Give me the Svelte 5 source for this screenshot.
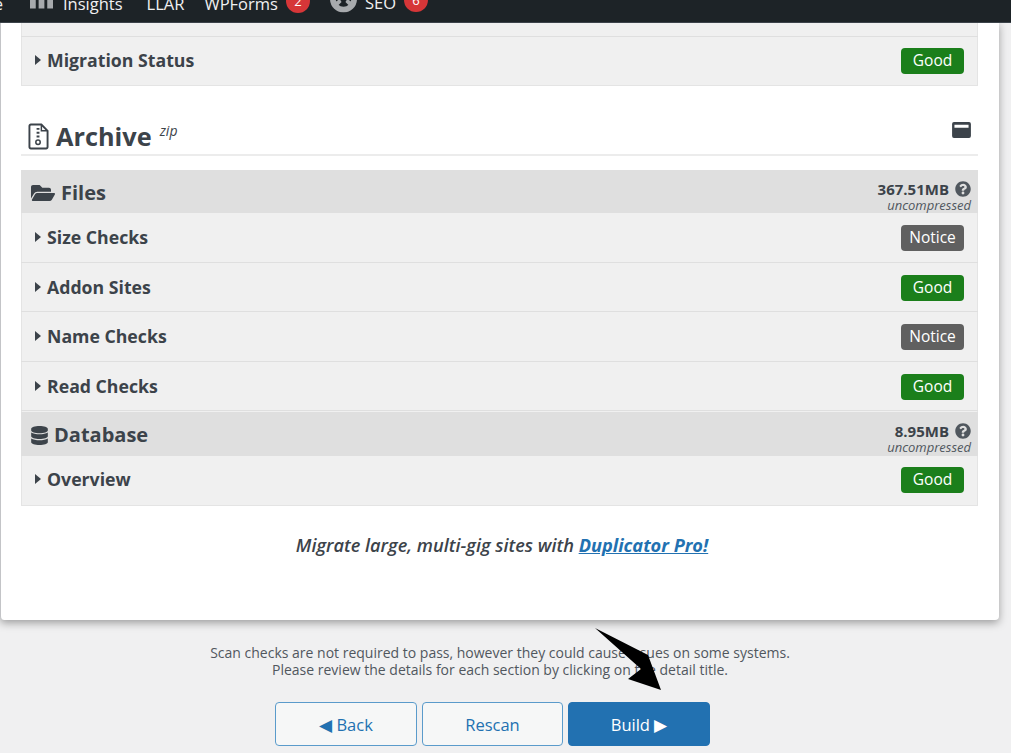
<script>
  const filesRows = [
    { name: "Size Checks", status: "Notice" },
    { name: "Addon Sites", status: "Good" },
    { name: "Name Checks", status: "Notice" },
    { name: "Read Checks", status: "Good" }
  ];
  const helpPath = "M504 256c0 136.997-111.043 248-248 248S8 392.997 8 256C8 119.083 119.043 8 256 8s248 111.083 248 248zM262.655 90c-54.497 0-89.255 22.957-116.549 63.758-3.536 5.286-2.353 12.415 2.715 16.258l34.699 26.31c5.205 3.947 12.621 3.008 16.665-2.122 17.864-22.658 30.113-35.797 57.303-35.797 20.429 0 45.698 13.148 45.698 32.958 0 14.976-12.363 22.667-32.534 33.976C247.128 238.528 216 254.941 216 296v4c0 6.627 5.373 12 12 12h56c6.627 0 12-5.373 12-12v-1.333c0-28.462 83.186-29.647 83.186-106.667 0-58.002-60.165-102-116.531-102zM256 338c-25.365 0-46 20.635-46 46 0 25.364 20.635 46 46 46s46-20.636 46-46c0-25.365-20.635-46-46-46z";
</script>

{#snippet row(name, status, cls)}
  <div class="row {cls}">
    <span class="row-name"><i class="caret"></i>{name}</span>
    <span class="badge {status === 'Good' ? 'good' : 'notice'}">{status}</span>
  </div>
{/snippet}

{#snippet group(size)}
  <div class="size">
    <div class="size-num">
      {size}
      <svg class="help" viewBox="0 0 512 512"><path d={helpPath} /></svg>
    </div>
    <em>uncompressed</em>
  </div>
{/snippet}

<div class="adminbar">
  <span class="item cut">e</span>
  <span class="item insights">
    <svg class="bars" viewBox="0 0 24 20"><path d="M0 0h6v20H0zM9 0h6v20H9zM18 0h6v20h-6z" /></svg>
    Insights
  </span>
  <span class="item llar">LLAR</span>
  <span class="item wpforms">WPForms<b class="count">2</b></span>
  <span class="item seo">
    <svg class="gear" viewBox="0 0 28 28">
      <circle cx="14" cy="14" r="14" fill="#a7aaad" />
      <circle cx="14" cy="14" r="8" fill="#1d2327" />
      <path d="M12 2h4v8h-4zM3 19l7-5 2 3-6 6zM25 19l-7-5-2 3 6 6z" fill="#a7aaad" />
    </svg>
    SEO<b class="count">6</b>
  </span>
</div>

<main>
  <section class="card">
    <div class="box first">
      <div class="row stub"></div>
      {@render row("Migration Status", "Good", "migration")}
    </div>

    <div class="title">
      <h2>
        <svg class="zip" viewBox="0 0 22 28">
          <path d="M3 1.500h11l6.500 6.500V25a1.500 1.500 0 0 1-1.500 1.500H3A1.500 1.500 0 0 1 1.500 25V3A1.500 1.500 0 0 1 3 1.500z" fill="none" stroke="#3c434a" stroke-width="2" />
          <path d="M14 2v6h6" fill="none" stroke="#3c434a" stroke-width="1.500" />
          <path d="M9 5h3v2H9zM9 9h3v2H9zM9 13h3v2H9z" fill="#3c434a" />
          <circle cx="10.500" cy="20" r="2.300" fill="none" stroke="#3c434a" stroke-width="1.600" />
        </svg>
        Archive <sup>zip</sup>
      </h2>
      <svg class="window" viewBox="0 0 20 17">
        <path fill-rule="evenodd" d="M2 0h16a2 2 0 0 1 2 2v13a2 2 0 0 1-2 2H2a2 2 0 0 1-2-2V2a2 2 0 0 1 2-2zM2.500 3v3h15V3z" />
      </svg>
    </div>

    <div class="box">
      <div class="group-head files">
        <h3>
          <svg class="folder" viewBox="0 0 576 512"><path d="M572.694 292.093L500.27 416.248A63.997 63.997 0 0 1 444.989 448H45.025c-18.523 0-30.064-20.093-20.731-36.093l72.424-124.155A64 64 0 0 1 152 256h399.964c18.523 0 30.064 20.093 20.73 36.093zM152 224h328v-48c0-26.51-21.49-48-48-48H272l-64-64H48C21.49 64 0 85.49 0 112v278.046l69.077-118.418C86.214 242.25 117.989 224 152 224z" /></svg>
          Files
        </h3>
        {@render group("367.51MB")}
      </div>
      {#each filesRows as item}
        {@render row(item.name, item.status, "")}
      {/each}
      <div class="group-head database">
        <h3>
          <svg class="db" viewBox="0 0 448 512"><path d="M448 73.143v45.714C448 159.143 347.667 192 224 192S0 159.143 0 118.857V73.143C0 32.857 100.333 0 224 0s224 32.857 224 73.143zM448 176v102.857C448 319.143 347.667 352 224 352S0 319.143 0 278.857V176c48.125 33.143 136.208 48.572 224 48.572S399.874 209.143 448 176zm0 160v102.857C448 479.143 347.667 512 224 512S0 479.143 0 438.857V336c48.125 33.143 136.208 48.572 224 48.572S399.874 369.143 448 336z" /></svg>
          Database
        </h3>
        {@render group("8.95MB")}
      </div>
      {@render row("Overview", "Good", "last")}
    </div>

    <p class="promo">Migrate large, multi-gig sites with <a href="#pro">Duplicator Pro!</a></p>
  </section>

  <p class="note">
    Scan checks are not required to pass, however they could cause issues on some systems.<br />
    Please review the details for each section by clicking on the detail title.
  </p>

  <div class="actions">
    <button class="btn">◀ Back</button>
    <button class="btn rescan">Rescan</button>
    <button class="btn primary">Build ▶</button>
  </div>
</main>

<svg class="arrow" viewBox="0 0 1011 753">
  <path d="M595 628L648 655L661 690L628 679L641 669z" />
</svg>

<style>
  :global(body) {
    background: #f0f0f1;
    font-family: "Open Sans", "Noto Sans", sans-serif;
    color: #3c434a;
    overflow: hidden;
  }
  .adminbar {
    height: 22px;
    background: #1d2327;
    color: #f0f0f1;
    display: flex;
    align-items: flex-end;
    overflow: hidden;
    font-size: 16.500px;
    line-height: 24px;
    box-shadow: 0 1px 0 #3c434a;
    position: relative;
  }
  .item {
    display: flex;
    align-items: center;
    flex: none;
    margin-bottom: 6px;
  }
  .cut {
    width: 3px;
    justify-content: flex-end;
    margin-right: 27px;
  }
  .insights {
    gap: 10px;
    margin-right: 24px;
  }
  .bars {
    width: 23px;
    height: 20px;
    fill: #a7aaad;
    transform: translateY(-5px);
  }
  .llar {
    margin-right: 20px;
  }
  .wpforms {
    margin-right: 20px;
  }
  .gear {
    width: 27px;
    height: 27px;
    margin-right: 8px;
    transform: translateY(-3.500px);
  }
  .count {
    width: 24px;
    height: 24px;
    border-radius: 50%;
    background: #d63638;
    color: #fff;
    font-weight: 400;
    font-size: 13px;
    text-align: center;
    margin-left: 8px;
    transform: translateY(-3px);
  }
  main {
    display: flex;
    flex-direction: column;
    align-items: flex-start;
  }
  .card {
    box-sizing: border-box;
    width: 999px;
    height: 598px;
    padding: 0 20px;
    background: #fff;
    border-left: 1px solid #c3c4c7;
    border-radius: 0 0 4px 4px;
    box-shadow: 0 3px 8px rgba(0, 0, 0, 0.35);
  }
  .box {
    width: 957px;
    background: #f0f0f0;
    box-shadow: inset 0 -1px 0 #e4e4e4, inset -1px 0 0 #e4e4e4, inset 1px 0 0 #e4e4e4;
  }
  .row {
    box-sizing: border-box;
    height: 49.500px;
    display: flex;
    justify-content: space-between;
    align-items: center;
    padding: 0 14px 0 14px;
    border-bottom: 1px solid #dfdfdf;
  }
  .stub {
    height: 15px;
    padding: 0;
  }
  .row.migration {
    height: 49px;
    padding-bottom: 3px;
    border-bottom: 0;
  }
  .row.last {
    height: 50px;
    padding-bottom: 4px;
    border-bottom: 0;
  }
  .row-name {
    font-size: 17.700px;
    font-weight: 700;
    display: flex;
    align-items: center;
    line-height: 24px;
  }
  .caret {
    width: 0;
    height: 0;
    border-left: 6px solid #3c434a;
    border-top: 5.500px solid transparent;
    border-bottom: 5.500px solid transparent;
    margin-right: 6px;
  }
  .badge {
    box-sizing: border-box;
    width: 63px;
    height: 26px;
    margin-top: 2px;
    border-radius: 4px;
    color: #fff;
    font-size: 15.500px;
    line-height: 25px;
    text-align: center;
  }
  .good {
    background: #1b7f1b;
  }
  .notice {
    background: #606060;
  }
  .title {
    width: 957px;
    height: 70px;
    box-sizing: border-box;
    display: flex;
    justify-content: space-between;
    align-items: flex-end;
    border-bottom: 2px solid #ececec;
  }
  .title h2 {
    margin: 0 0 0 7px;
    font-size: 25.300px;
    font-weight: 700;
    line-height: 36px;
    display: flex;
    align-items: center;
    gap: 7px;
  }
  .title sup {
    font-size: 14px;
    font-weight: 400;
    font-style: italic;
    line-height: 14px;
    align-self: flex-start;
    margin: 6px 0 0 1px;
  }
  .zip {
    width: 21px;
    height: 27px;
  }
  .window {
    width: 19px;
    height: 16px;
    fill: #3c434a;
    margin: 0 7px 16px 0;
  }
  .box:not(.first) {
    margin-top: 14px;
  }
  .group-head {
    box-sizing: border-box;
    height: 44px;
    background: #dfdfdf;
    display: flex;
    justify-content: space-between;
    padding: 0 7px 0 10px;
  }
  .group-head.files {
    height: 43px;
  }
  .group-head.database {
    margin-top: 1px;
  }
  .group-head h3 {
    box-sizing: border-box;
    margin: 0;
    padding-top: 2px;
    font-size: 20px;
    font-weight: 700;
    line-height: 36px;
    display: flex;
    align-items: center;
    gap: 6px;
  }
  .folder {
    width: 24px;
    height: 22px;
    fill: #3c434a;
  }
  .db {
    width: 17px;
    height: 19px;
    fill: #3c434a;
  }
  .size {
    text-align: right;
    margin-top: 11px;
    font-size: 15px;
    line-height: 16px;
  }
  .size-num {
    font-weight: 700;
    display: flex;
    align-items: center;
    justify-content: flex-end;
    gap: 6px;
  }
  .size em {
    display: block;
    margin-top: 1px;
    font-size: 13px;
    line-height: 15px;
    color: #50575e;
  }
  .help {
    width: 16px;
    height: 16px;
    fill: #50575e;
  }
  .promo {
    margin: 27px 0 0;
    padding-left: 5px;
    width: 957px;
    box-sizing: border-box;
    text-align: center;
    font-size: 18.200px;
    font-weight: 600;
    font-style: italic;
    line-height: 24px;
  }
  .promo a {
    color: #2271b1;
    font-weight: 700;
  }
  .note {
    width: 1000px;
    margin: 24px 0 0;
    text-align: center;
    font-size: 14px;
    line-height: 17px;
    color: #50575e;
  }
  .actions {
    display: flex;
    gap: 5px;
    margin-top: 24px;
    margin-left: 275px;
  }
  .btn {
    box-sizing: border-box;
    width: 142px;
    height: 44px;
    background: #f6f7f7;
    color: #2271b1;
    border: 1px solid #5a9bcb;
    border-radius: 4px;
    font-family: inherit;
    font-size: 16.500px;
  }
  .rescan {
    width: 141px;
  }
  .primary {
    background: #2271b1;
    border-color: #2271b1;
    color: #fff;
  }
  .arrow {
    position: absolute;
    left: 0;
    top: 0;
    width: 1011px;
    height: 753px;
    pointer-events: none;
  }
</style>
